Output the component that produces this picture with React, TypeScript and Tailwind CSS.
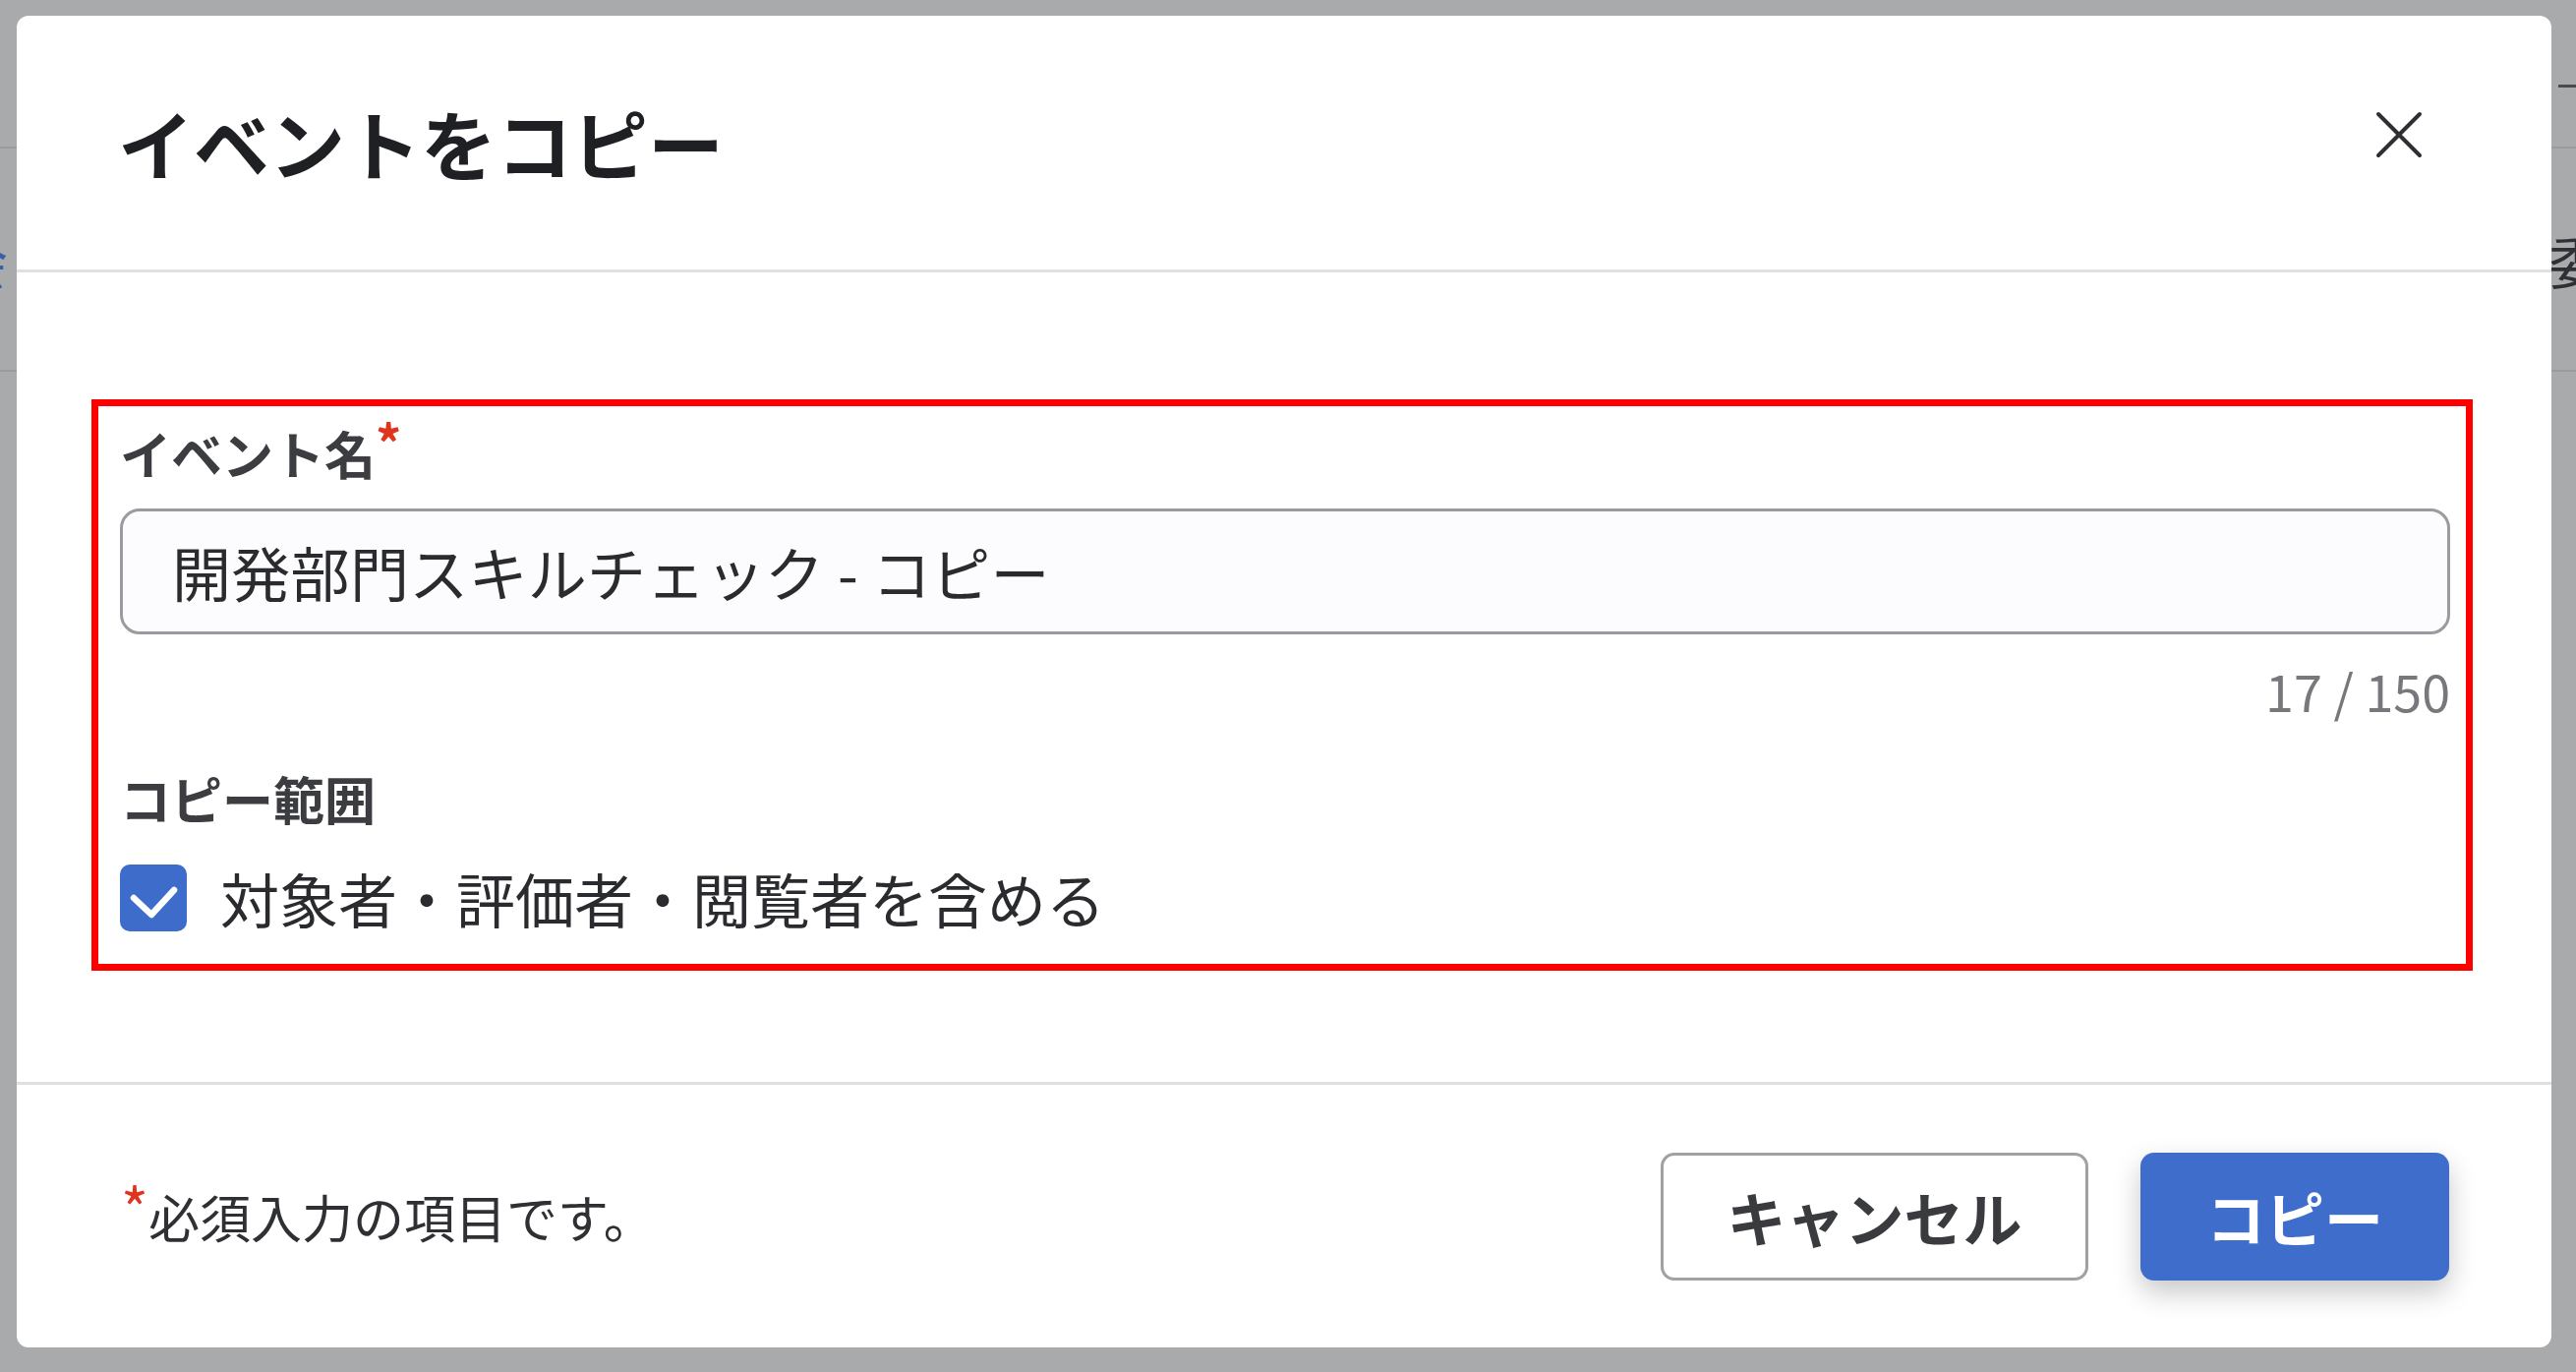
import React from "react";

function CloseIcon() {
  return (
    <svg width="48" height="48" viewBox="0 0 48 48" fill="none">
      <path d="M3 3L45 45M45 3L3 45" stroke="#2f2f33" strokeWidth="4" strokeLinecap="round" />
    </svg>
  );
}

function CheckIcon() {
  return (
    <svg width="68" height="68" viewBox="0 0 68 68" fill="none">
      <path d="M14 34L32 51L55 26" stroke="#ffffff" strokeWidth="6.5" strokeLinecap="round" strokeLinejoin="round" />
    </svg>
  );
}

export default function App() {
  return (
    <div className="relative w-[2620px] h-[1395px] overflow-hidden bg-[#a9aaac] font-['Noto_Sans_CJK_JP','Noto_Sans',sans-serif]">
      {/* page behind the overlay */}
      <div className="flex flex-col">
        <div className="h-[151px] border-b-[2px] border-[#9a9b9e] flex justify-end items-start pt-[86px]">
          <div className="w-[18px] h-[3px] bg-[#4a4b4f]" />
        </div>
        <div className="h-[227px] border-b-[2px] border-[#9a9b9e] flex items-center justify-between overflow-hidden">
          <span className="-ml-[50px] text-[58px] leading-none text-[#3b5ea8]">会</span>
          <span className="-mr-[30px] text-[58px] leading-none text-[#2f3033]">委</span>
        </div>
      </div>

      {/* dialog */}
      <div className="absolute left-[17px] top-[16px] w-[2578px] h-[1354px] bg-white rounded-[12px] flex flex-col overflow-hidden">
        {/* header */}
        <div className="h-[261px] shrink-0 border-b-[3px] border-[#dfe0e4] flex items-center justify-between pl-[103px] pr-[131px]">
          <h1 className="text-[77px] leading-none font-bold text-[#1f2023] -mt-[2px]">イベントをコピー</h1>
          <button className="-mt-[16px] w-[48px] h-[48px] flex items-center justify-center">
            <CloseIcon />
          </button>
        </div>

        {/* body */}
        <div className="flex-1 pt-[129px] pl-[76px] pr-[80px]">
          <div className="border-[7px] border-[#ff0000] pt-[12px] pb-[31px] pl-[22px] pr-[16px] flex flex-col">
            <div className="h-[72px] flex items-center text-[52px] font-bold text-[#3c3d40] leading-none">
              <span>イベント名</span>
              <span className="text-[#e0341f] -translate-y-[12px] inline-block">*</span>
            </div>
            <div className="mt-[20px] h-[128px] rounded-[20px] border-[3px] border-[#9a9a9f] bg-[#fcfcfe] flex items-center pl-[50px]">
              <span className="text-[60px] leading-none text-[#2a2b2e] tracking-[0.3px]">開発部門スキルチェック - コピー</span>
            </div>
            <div className="mt-[27px] h-[60px] flex items-center justify-end text-[52px] leading-none text-[#77787c]">
              17 / 150
            </div>
            <div className="mt-[44px] h-[72px] flex items-center text-[52px] font-bold text-[#3c3d40] leading-none">
              コピー範囲
            </div>
            <div className="mt-[29px] h-[72px] flex items-center">
              <div className="w-[68px] h-[68px] rounded-[10px] bg-[#3d6ccb] flex items-center justify-center shrink-0">
                <CheckIcon />
              </div>
              <span className="ml-[34px] text-[60px] leading-none text-[#2a2b2e]">対象者・評価者・閲覧者を含める</span>
            </div>
          </div>
        </div>

        {/* footer */}
        <div className="h-[270px] shrink-0 border-t-[3px] border-[#dfe0e4] flex items-center justify-between pl-[106px] pr-[104px]">
          <div className="flex items-center leading-none text-[#2f3033]">
            <span className="text-[60px] text-[#e0341f] -translate-y-[10px] inline-block">*</span>
            <span className="text-[52px]">必須入力の項目です。</span>
          </div>
          <div className="flex items-center gap-[53px]">
            <button className="w-[435px] h-[130px] rounded-[14px] border-[3px] border-[#a0a0a5] bg-white flex items-center justify-center text-[60px] font-bold leading-none text-[#3a3b3e]">
              キャンセル
            </button>
            <button className="w-[314px] h-[130px] rounded-[14px] bg-[#3e6dcb] flex items-center justify-center text-[60px] font-bold leading-none text-white shadow-[0_12px_28px_rgba(0,0,0,0.22)]">
              コピー
            </button>
          </div>
        </div>
      </div>
    </div>
  );
}
